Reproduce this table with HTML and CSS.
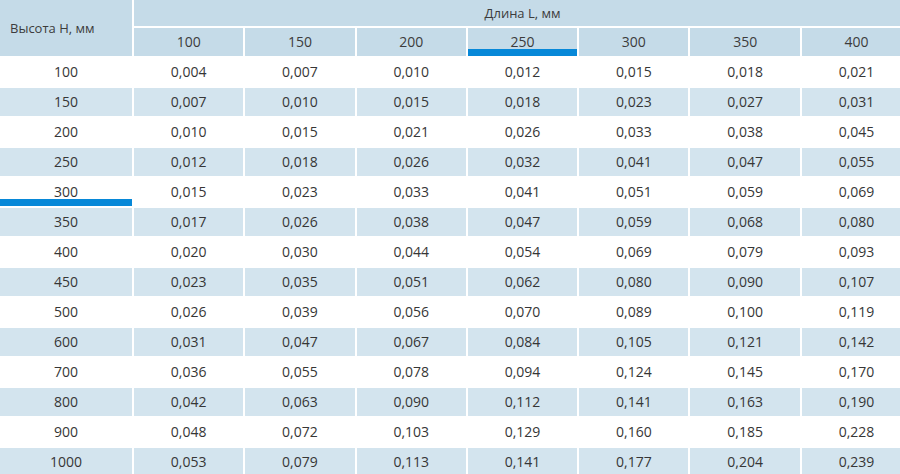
FILE: index.html
```html
<!DOCTYPE html>
<html lang="ru">
<head>
<meta charset="utf-8">
<title>Таблица</title>
<link rel="stylesheet" href="styles.css">
</head>
<body>
<table class="grid">
  <colgroup>
    <col class="c-first">
    <col class="c-data"><col class="c-data"><col class="c-data"><col class="c-data"><col class="c-data"><col class="c-data"><col class="c-data">
  </colgroup>
  <thead>
    <tr class="h1">
      <th rowspan="2" class="corner">Высота Н, мм</th>
      <th colspan="7" class="span">Длина L, мм</th>
    </tr>
    <tr class="h2">
      <th>100</th><th>150</th><th>200</th><th class="mark">250</th><th>300</th><th>350</th><th>400</th>
    </tr>
  </thead>
  <tbody>
    <tr><th>100</th><td>0,004</td><td>0,007</td><td>0,010</td><td>0,012</td><td>0,015</td><td>0,018</td><td>0,021</td></tr>
    <tr class="alt"><th>150</th><td>0,007</td><td>0,010</td><td>0,015</td><td>0,018</td><td>0,023</td><td>0,027</td><td>0,031</td></tr>
    <tr><th>200</th><td>0,010</td><td>0,015</td><td>0,021</td><td>0,026</td><td>0,033</td><td>0,038</td><td>0,045</td></tr>
    <tr class="alt"><th>250</th><td>0,012</td><td>0,018</td><td>0,026</td><td>0,032</td><td>0,041</td><td>0,047</td><td>0,055</td></tr>
    <tr><th class="mark">300</th><td>0,015</td><td>0,023</td><td>0,033</td><td>0,041</td><td>0,051</td><td>0,059</td><td>0,069</td></tr>
    <tr class="alt"><th>350</th><td>0,017</td><td>0,026</td><td>0,038</td><td>0,047</td><td>0,059</td><td>0,068</td><td>0,080</td></tr>
    <tr><th>400</th><td>0,020</td><td>0,030</td><td>0,044</td><td>0,054</td><td>0,069</td><td>0,079</td><td>0,093</td></tr>
    <tr class="alt"><th>450</th><td>0,023</td><td>0,035</td><td>0,051</td><td>0,062</td><td>0,080</td><td>0,090</td><td>0,107</td></tr>
    <tr><th>500</th><td>0,026</td><td>0,039</td><td>0,056</td><td>0,070</td><td>0,089</td><td>0,100</td><td>0,119</td></tr>
    <tr class="alt"><th>600</th><td>0,031</td><td>0,047</td><td>0,067</td><td>0,084</td><td>0,105</td><td>0,121</td><td>0,142</td></tr>
    <tr><th>700</th><td>0,036</td><td>0,055</td><td>0,078</td><td>0,094</td><td>0,124</td><td>0,145</td><td>0,170</td></tr>
    <tr class="alt"><th>800</th><td>0,042</td><td>0,063</td><td>0,090</td><td>0,112</td><td>0,141</td><td>0,163</td><td>0,190</td></tr>
    <tr><th>900</th><td>0,048</td><td>0,072</td><td>0,103</td><td>0,129</td><td>0,160</td><td>0,185</td><td>0,228</td></tr>
    <tr class="alt"><th>1000</th><td>0,053</td><td>0,079</td><td>0,113</td><td>0,141</td><td>0,177</td><td>0,204</td><td>0,239</td></tr>
  </tbody>
</table>
</body>
</html>
```

FILE: styles.css
```css
html, body {
  margin: 0;
  padding: 0;
  background: #ffffff;
  overflow: hidden;
}

body {
  width: 900px;
  height: 474px;
  font-family: "Open Sans", "DejaVu Sans", sans-serif;
  color: #363636;
}

.grid {
  border-collapse: separate;
  border-spacing: 2px;
  table-layout: fixed;
  width: 915px;
  margin: -2px 0 0 -2px;
}

.c-first { width: 132px; }
.c-data { width: 109.3px; }

.grid th,
.grid td {
  padding: 0;
  font-weight: 400;
  text-align: center;
  vertical-align: middle;
  font-size: 14px;
  line-height: 20px;
  white-space: nowrap;
}

.h1 th {
  height: 26px;
  background: #c5dbe8;
  font-size: 13px;
  color: #3c3c3c;
}

.h1 .span {
  padding-top: 0;
}

.h1 .corner {
  text-align: left;
  padding-left: 10px;
  font-size: 13px;
}

.h2 th {
  height: 28px;
  background: #c5dbe8;
  color: #3c3c3c;
}

tbody th,
tbody td {
  height: 28px;
}

tbody th {
  padding-right: 30px;
}

tbody tr.alt th,
tbody tr.alt td {
  background: #d3e4ee;
}

.mark {
  box-shadow: inset 0 -7px 0 #0788d8;
}
```
